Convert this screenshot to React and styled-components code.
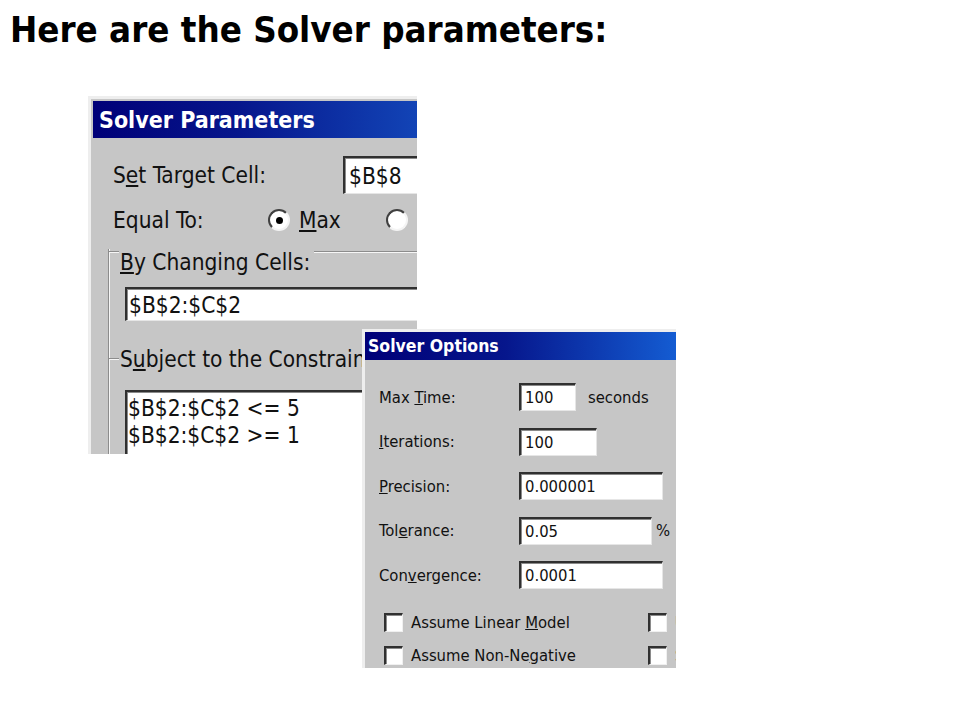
import React from 'react'
import styled, { createGlobalStyle } from 'styled-components'

const GlobalStyle = createGlobalStyle`
  html, body {
    margin: 0;
    padding: 0;
    background: #fff;
  }
  body {
    width: 960px;
    height: 720px;
    overflow: hidden;
  }
`

const UI_FONT = `"DejaVu Sans Condensed", "DejaVu Sans", Verdana, sans-serif`

const Slide = styled.div`
  width: 960px;
  height: 720px;
  padding: 0 10px;
  box-sizing: border-box;
`

const Heading = styled.h1`
  margin: 0;
  padding-top: 8px;
  font-family: ${UI_FONT};
  font-weight: bold;
  font-size: 36.3px;
  line-height: 44px;
  color: #000;
  white-space: nowrap;
`

const Stage = styled.div`
  position: relative;
  margin: 44px 0 0 78px;
  width: 600px;
  height: 580px;
`

const Window = styled.div`
  width: ${p => p.$w}px;
  height: ${p => p.$h}px;
  box-sizing: border-box;
  overflow: hidden;
  background: #c6c6c6;
  border-top: 3px solid #eeeeee;
  border-left: 3px solid #eeeeee;
  padding: ${p => p.$inset}px 0 0 ${p => p.$inset}px;
  font-family: ${UI_FONT};
  color: #111;
`

const OptionsWindow = styled(Window)`
  position: absolute;
  left: 274px;
  top: 233px;
`

const TitleBar = styled.div`
  height: ${p => p.$h}px;
  display: flex;
  align-items: center;
  padding-left: ${p => p.$pad}px;
  background: linear-gradient(to right, #000078 0%, #06168c 45%, ${p => p.$end} 100%);
  color: #fff;
  font-weight: bold;
  font-size: ${p => p.$size}px;
  white-space: nowrap;
`

const Body = styled.div`
  padding: ${p => p.$top}px 0 0 ${p => p.$left}px;
  white-space: nowrap;
`

const Row = styled.div`
  display: flex;
  align-items: center;
  height: ${p => p.$h}px;
  margin-top: ${p => p.$gap || 0}px;
  font-size: ${p => p.$size}px;
`

const Label = styled.span`
  flex: none;
  width: ${p => p.$w}px;
`

const Field = styled.div`
  flex: none;
  box-sizing: border-box;
  width: ${p => p.$w}px;
  height: ${p => p.$h}px;
  background: #fff;
  border-top: 2px solid #303030;
  border-left: 2px solid #303030;
  border-right: 1px solid #e6e6e6;
  border-bottom: 1px solid #e6e6e6;
  box-shadow: inset 1px 1px 0 #8a8a8a;
  padding-left: ${p => p.$pad || 4}px;
  display: flex;
  align-items: center;
`

const Unit = styled.span`
  margin-left: ${p => p.$gap}px;
`

const Radio = styled.span`
  flex: none;
  width: 22px;
  height: 22px;
  box-sizing: border-box;
  border-radius: 50%;
  background: #fff;
  border: 2px solid;
  border-color: #404040 #f4f4f4 #f4f4f4 #404040;
  display: flex;
  align-items: center;
  justify-content: center;
  margin-right: 9px;

  &::after {
    content: '';
    width: 7px;
    height: 7px;
    border-radius: 50%;
    background: ${p => (p.$checked ? '#000' : 'transparent')};
  }
`

const Frame = styled.div`
  margin: 19px 0 0 15px;
  border-left: 1px solid #8c8c8c;
  box-shadow: inset 1px 0 0 #f6f6f6;
  padding-left: 16px;
  height: 220px;
`

const GroupHead = styled.div`
  display: flex;
  align-items: ${p => (p.$center ? 'center' : 'flex-start')};
  margin: ${p => p.$top}px 0 0 -16px;
  height: 27px;
  font-size: 22.5px;

  &::before,
  &::after {
    content: '';
    height: 0;
    border-top: 1px solid #8c8c8c;
    border-bottom: 1px solid #f6f6f6;
    margin-top: ${p => (p.$center ? 0 : 2)}px;
  }
  &::before {
    width: 10px;
    margin-right: 1px;
  }
  &::after {
    flex: 1;
    margin-left: 4px;
  }
`

const ListBox = styled.div`
  box-sizing: border-box;
  width: 300px;
  height: 120px;
  margin-top: ${p => p.$gap}px;
  background: #fff;
  border-top: 2px solid #303030;
  border-left: 2px solid #303030;
  box-shadow: inset 1px 1px 0 #8a8a8a;
  padding: 3px 0 0 1px;
  font-size: 22.5px;
  line-height: 27px;
`

const CheckRow = styled.div`
  display: flex;
  align-items: center;
  height: 19px;
  margin-top: ${p => p.$gap}px;
  padding-left: 5px;
  font-size: 16.5px;
`

const CheckItem = styled.div`
  flex: none;
  width: ${p => p.$w}px;
  display: flex;
  align-items: center;
`

const Box = styled.span`
  flex: none;
  width: 19px;
  height: 19px;
  box-sizing: border-box;
  background: #fff;
  border-top: 2px solid #303030;
  border-left: 2px solid #303030;
  border-right: 1px solid #f0f0f0;
  border-bottom: 1px solid #f0f0f0;
  box-shadow: inset 1px 1px 0 #8a8a8a;
  margin-right: 8px;
`

const options = [
  { label: <>Max <u>T</u>ime:</>, value: '100', w: 57, unit: 'seconds', unitGap: 12 },
  { label: <><u>I</u>terations:</>, value: '100', w: 78 },
  { label: <><u>P</u>recision:</>, value: '0.000001', w: 144 },
  { label: <>Tol<u>e</u>rance:</>, value: '0.05', w: 133, unit: '%', unitGap: 4 },
  { label: <>Con<u>v</u>ergence:</>, value: '0.0001', w: 144 },
]

const SolverParameters = () => (
  <Window $w={329} $h={358} $inset={2}>
    <TitleBar $h={37} $pad={6} $size={23} $end="#1244b6">Solver Parameters</TitleBar>
    <Body $top={18} $left={20}>
      <Row $h={38} $size={22.5}>
        <Label $w={230}>S<u>e</u>t Target Cell:</Label>
        <Field $w={200} $h={38}>$B$8</Field>
      </Row>
      <Row $h={26} $gap={13} $size={22.5}>
        <Label $w={155}>Equal To:</Label>
        <Radio $checked />
        <Label $w={87}><u>M</u>ax</Label>
        <Radio />
      </Row>
    </Body>
    <Frame>
      <GroupHead $top={-3}><span><u>B</u>y Changing Cells:</span></GroupHead>
      <Row $h={34} $gap={11} $size={22.5}>
        <Field $w={300} $h={34} $pad={2}>$B$2:$C$2</Field>
      </Row>
      <GroupHead $top={24} $center><span>S<u>u</u>bject to the Constraints:</span></GroupHead>
      <ListBox $gap={18}>
        <div>$B$2:$C$2 &lt;= 5</div>
        <div>$B$2:$C$2 &gt;= 1</div>
      </ListBox>
    </Frame>
  </Window>
)

const SolverOptions = () => (
  <OptionsWindow $w={314} $h={339} $inset={0}>
    <TitleBar $h={28} $pad={3} $size={17.5} $end="#145cd2">Solver Options</TitleBar>
    <Body $top={23} $left={14}>
      {options.map((o, i) => (
        <Row key={i} $h={28} $gap={i === 0 ? 0 : 16.5} $size={16.5}>
          <Label $w={140}>{o.label}</Label>
          <Field $w={o.w} $h={28}>{o.value}</Field>
          {o.unit && <Unit $gap={o.unitGap}>{o.unit}</Unit>}
        </Row>
      ))}
      <CheckRow $gap={24}>
        <CheckItem $w={264}><Box /><span>Assume Linear <u>M</u>odel</span></CheckItem>
        <CheckItem $w={200}><Box /><span>Use Automatic Scaling</span></CheckItem>
      </CheckRow>
      <CheckRow $gap={14}>
        <CheckItem $w={264}><Box /><span>Assume Non-Ne<u>g</u>ative</span></CheckItem>
        <CheckItem $w={200}><Box /><span>Show Iteration Results</span></CheckItem>
      </CheckRow>
    </Body>
  </OptionsWindow>
)

export default function App() {
  return (
    <Slide>
      <GlobalStyle />
      <Heading>Here are the Solver parameters:</Heading>
      <Stage>
        <SolverParameters />
        <SolverOptions />
      </Stage>
    </Slide>
  )
}
